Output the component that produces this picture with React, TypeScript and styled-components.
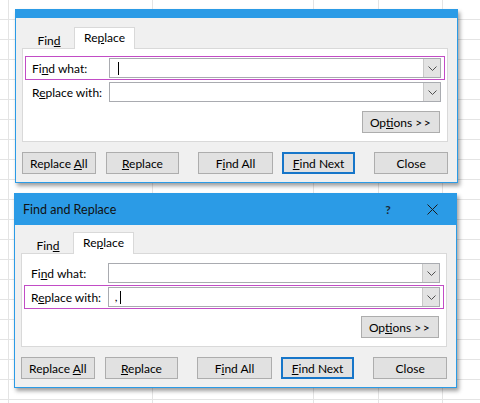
import styled, { createGlobalStyle } from 'styled-components'

const GlobalStyle = createGlobalStyle`
  html, body {
    margin: 0;
    padding: 0;
  }

  body {
    width: 480px;
    height: 403px;
    overflow: hidden;
    background-color: #fff;
    background-image:
      linear-gradient(
        90deg,
        transparent 8px, #e4e4e4 8px 9px,
        transparent 9px 152px, #e4e4e4 152px 153px,
        transparent 153px 313px, #e4e4e4 313px 314px,
        transparent 314px 378px, #e4e4e4 378px 379px,
        transparent 379px 442px, #e4e4e4 442px 443px,
        transparent 443px
      ),
      repeating-linear-gradient(180deg, transparent 0 19px, #e4e4e4 19px 20px);
  }
`

// helpers
const Accel = ({ text, at }: { text: string; at?: number }) => {
  if (at === undefined) return <>{text}</>
  return (
    <>
      {text.slice(0, at)}
      <u>{text[at]}</u>
      {text.slice(at + 1)}
    </>
  )
}

const Chevron = () => (
  <svg width="9" height="5" viewBox="0 0 9 5">
    <polyline points="0.5,0.5 4.5,4.5 8.5,0.5" fill="none" stroke="#505050" strokeWidth="1" />
  </svg>
)

const CloseIcon = () => (
  <svg width="11" height="11" viewBox="0 0 11 11">
    <path d="M0.5 0.5 L10.5 10.5 M10.5 0.5 L0.5 10.5" stroke="#1c1c1c" strokeWidth="1" fill="none" />
  </svg>
)

type ComboProps = {
  value?: string
  focused?: boolean
}

const ComboBox = ({ value = '', focused }: ComboProps) => (
  <StyledCombo>
    <StyledField>
      {value}
      {focused && <StyledCaret />}
    </StyledField>
    <StyledDrop>
      <Chevron />
    </StyledDrop>
  </StyledCombo>
)

type DialogProps = {
  active: 'find' | 'replace'
  replaceValue?: string
  shift?: number
  cropped?: boolean
}

const FindReplaceDialog = ({ active, replaceValue, shift = 0, cropped }: DialogProps) => (
  <StyledDialog $shift={shift}>
    {cropped ? (
      <StyledTitleBar $cropped />
    ) : (
      <StyledTitleBar>
        <StyledTitle>Find and Replace</StyledTitle>
        <StyledHelp>?</StyledHelp>
        <StyledClose>
          <CloseIcon />
        </StyledClose>
      </StyledTitleBar>
    )}
    <StyledBody $cropped={cropped}>
      <StyledTabs>
        <StyledTab $width={50}>
          <Accel text="Find" at={3} />
        </StyledTab>
        <StyledTab $width={61} $active>
          <Accel text="Replace" at={2} />
        </StyledTab>
      </StyledTabs>
      <StyledPanel>
        <StyledFieldRow $highlight={active === 'find'}>
          <StyledLabel>
            <Accel text="Find what:" at={2} />
          </StyledLabel>
          <ComboBox focused={active === 'find'} />
        </StyledFieldRow>
        <StyledFieldRow $highlight={active === 'replace'}>
          <StyledLabel>
            <Accel text="Replace with:" at={1} />
          </StyledLabel>
          <ComboBox value={replaceValue} focused={active === 'replace'} />
        </StyledFieldRow>
        <StyledOptionsRow>
          <StyledButton $width={78}>
            <Accel text="Options" at={2} /> <StyledArrows>&gt;&gt;</StyledArrows>
          </StyledButton>
        </StyledOptionsRow>
      </StyledPanel>
      <StyledButtonRow>
        <StyledButton>
          <Accel text="Replace All" at={8} />
        </StyledButton>
        <StyledButton $gap={10}>
          <Accel text="Replace" at={0} />
        </StyledButton>
        <StyledButton $gap={19} $width={75}>
          <Accel text="Find All" at={1} />
        </StyledButton>
        <StyledButton $gap={9} $primary>
          <Accel text="Find Next" at={0} />
        </StyledButton>
        <StyledButton $gap={19}>
          <Accel text="Close" />
        </StyledButton>
      </StyledButtonRow>
    </StyledBody>
  </StyledDialog>
)

const App = () => {
  return (
    <StyledStage>
      <GlobalStyle />
      <FindReplaceDialog active="find" shift={1} cropped />
      <FindReplaceDialog active="replace" replaceValue="," />
    </StyledStage>
  )
}

export default App

const StyledStage = styled.main`
  display: flex;
  flex-direction: column;
  gap: 10px;
  padding: 9px 0 0 14px;
  font-family: Lato, 'Noto Sans', sans-serif;
  font-size: 12px;
  color: #000;
`

const StyledDialog = styled.section<{ $shift: number }>`
  box-sizing: border-box;
  width: 443px;
  margin-left: ${({ $shift }) => $shift}px;
  border: 1px solid #2b9be6;
  background: #f0f0f0;
  box-shadow: 2px 3px 4px rgba(0, 0, 0, 0.38);
`

const StyledTitleBar = styled.header<{ $cropped?: boolean }>`
  display: flex;
  align-items: center;
  height: ${({ $cropped }) => ($cropped ? 8 : 31)}px;
  padding: 0 9px 0 8px;
  background: #2b9be6;
  color: #111;
  font-size: 12.5px;
`

const StyledTitle = styled.h1`
  flex: 1;
  margin: 0;
  font-size: inherit;
  font-weight: normal;
`

const StyledHelp = styled.span`
  width: 20px;
  text-align: center;
  font-weight: bold;
  font-size: 12px;
  color: #1a2a3a;
`

const StyledClose = styled.span`
  display: flex;
  align-items: center;
  justify-content: center;
  width: 30px;
  margin-left: 19px;
`

const StyledBody = styled.div<{ $cropped?: boolean }>`
  padding: ${({ $cropped }) => ($cropped ? 9 : 7)}px 9px 8px 6px;
`

const StyledTabs = styled.div`
  display: flex;
  align-items: flex-end;
  height: 21px;
  padding-left: 2px;
`

const StyledTab = styled.div<{ $width: number; $active?: boolean }>`
  box-sizing: border-box;
  display: flex;
  align-items: center;
  justify-content: center;
  width: ${({ $width }) => $width}px;
  height: ${({ $active }) => ($active ? 22 : 19)}px;
  padding-bottom: ${({ $active }) => ($active ? 2 : 0)}px;
  background: ${({ $active }) => ($active ? '#fff' : 'transparent')};
  border: 1px solid ${({ $active }) => ($active ? '#d9d9d9' : 'transparent')};
  border-bottom: none;
  margin-bottom: -1px;
  position: relative;
  z-index: 1;
`

const StyledPanel = styled.div`
  border: 1px solid #d9d9d9;
  background: #fff;
  padding: 7px 2px 8px;
`

const StyledFieldRow = styled.div<{ $highlight?: boolean }>`
  display: flex;
  align-items: center;
  padding: 1px 3px 1px 6px;
  border: 1px solid ${({ $highlight }) => ($highlight ? '#c24cc6' : 'transparent')};
`

const StyledLabel = styled.label`
  width: 77px;
  white-space: nowrap;
`

const StyledCombo = styled.div`
  box-sizing: border-box;
  display: flex;
  width: 333px;
  height: 20px;
  border: 1px solid #a9abb0;
  background: #fff;
`

const StyledField = styled.div`
  flex: 1;
  display: flex;
  align-items: center;
  padding-left: 6px;
  font-size: 12px;
  line-height: 1;
`

const StyledCaret = styled.span`
  display: inline-block;
  width: 1px;
  height: 13px;
  margin-left: 2px;
  background: #000;
`

const StyledDrop = styled.div`
  box-sizing: border-box;
  display: flex;
  align-items: center;
  justify-content: center;
  width: 17px;
  background: #e3e3e3;
  border-left: 1px solid #c9c9c9;
`

const StyledOptionsRow = styled.div`
  display: flex;
  justify-content: flex-end;
  margin-top: 7px;
  padding-right: 5px;
`

const StyledArrows = styled.span`
  letter-spacing: 1.5px;
`

const StyledButtonRow = styled.div`
  display: flex;
  margin-top: 10px;
`

const StyledButton = styled.button<{ $width?: number; $gap?: number; $primary?: boolean }>`
  box-sizing: border-box;
  width: ${({ $width }) => $width ?? 74}px;
  height: 22px;
  margin: 0 0 0 ${({ $gap }) => $gap ?? 0}px;
  padding: 0;
  background: #e1e1e1;
  border: ${({ $primary }) => ($primary ? '2px solid #1776c9' : '1px solid #adadad')};
  font-family: inherit;
  font-size: 12px;
  color: #000;
  white-space: nowrap;
`
